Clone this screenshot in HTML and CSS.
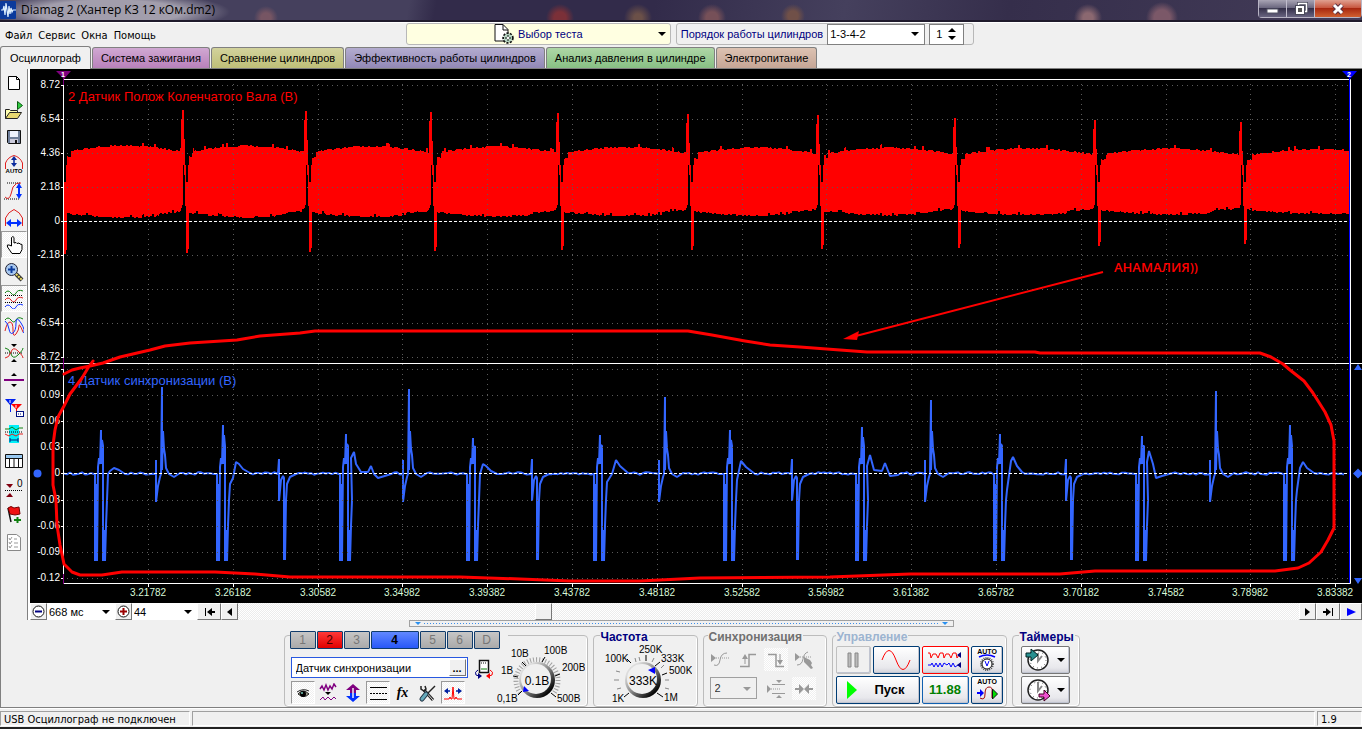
FILE: index.html
```
<!DOCTYPE html>
<html lang="ru">
<head>
<meta charset="utf-8">
<title>Diamag 2 (Хантер КЗ 12 кОм.dm2)</title>
<link rel="stylesheet" href="styles.css">
</head>
<body>
<header class="titlebar">
  <svg class="app-icon" width="16" height="18" viewBox="0 0 16 18"><rect width="16" height="18" rx="1" fill="#0b3a9c"/><path d="M1 9h2l1-4 1 9 1-12 2 14 1-11 1 8 1-6 1 4 1-2h3" fill="none" stroke="#dff0ff" stroke-width="1.2"/></svg>
  <h1 class="title">Diamag 2 (Хантер КЗ 12 кОм.dm2)</h1>
  <div class="win-buttons">
    <button class="win" aria-label="Свернуть"><svg width="14" height="14" viewBox="0 0 14 14"><rect x="1" y="7" width="11" height="4" fill="#fff" stroke="#555566"/></svg></button>
    <button class="win" aria-label="Развернуть"><svg width="14" height="14" viewBox="0 0 14 14"><path d="M4.500 4V1.500h8v8H10" fill="none" stroke="#4a4a5a" stroke-width="3"/><path d="M4.500 4V1.500h8v8H10" fill="none" stroke="#fff" stroke-width="1.500"/><rect x="3" y="5" width="6" height="6" fill="none" stroke="#4a4a5a" stroke-width="4"/><rect x="3" y="5" width="6" height="6" fill="#555" stroke="#fff" stroke-width="2"/></svg></button>
    <button class="win win-close" aria-label="Закрыть"><svg width="14" height="12" viewBox="0 0 14 12"><path d="M3 2l8 8M11 2l-8 8" stroke="#5a3040" stroke-width="5"/><path d="M3 2l8 8M11 2l-8 8" stroke="#fff" stroke-width="3"/></svg></button>
  </div>
</header>

<div class="menubar">
  <nav class="menu"><a href="#">Файл</a><a href="#">Сервис</a><a href="#">Окна</a><a href="#">Помощь</a></nav>
  <div class="tools">
    <button class="test-pick">
      <svg width="20" height="20" viewBox="0 0 20 20"><path d="M1 .5h8l5 5V17H1z" fill="#fff" stroke="#111"/><path d="M9 .5V6h5" fill="none" stroke="#111"/><circle cx="14" cy="14" r="4.500" fill="#b8d8c4" stroke="#111" stroke-width="2.500" stroke-dasharray="2 1.200"/><circle cx="14" cy="14" r="4" fill="#b8d8c4"/><path d="M11 14h6M14 11v6" stroke="#111"/><circle cx="14" cy="14" r="1.200" fill="#fff"/></svg>
      <span>Выбор теста</span><i class="caret"></i>
    </button>
    <div class="order">
      <label for="order">Порядок работы цилиндров</label>
      <div class="pick order-pick"><select id="order"><option>1-3-4-2</option></select></div>
      <div class="spin"><input type="text" value="1" aria-label="Цилиндр"><span class="spin-arrows"><button class="up" aria-label="Больше"></button><button class="down" aria-label="Меньше"></button></span></div>
    </div>
  </div>
</div>

<nav class="tabs">
  <button class="tab tab-active">Осциллограф</button>
  <button class="tab tab-pink">Система зажигания</button>
  <button class="tab tab-olive">Сравнение цилиндров</button>
  <button class="tab tab-violet">Эффективность работы цилиндров</button>
  <button class="tab tab-green">Анализ давления в цилиндре</button>
  <button class="tab tab-brown">Электропитание</button>
</nav>

<main class="work">
  <aside class="side">
    <button aria-label="Новый"><svg viewBox="0 0 20 20"><path d="M4.500 3.500h8l3 3v10h-11z" fill="#fff" stroke="#000"/><path d="M12.500 3.500v3h3" fill="none" stroke="#000"/></svg></button>
    <button aria-label="Открыть"><svg viewBox="0 0 20 20"><path d="M1.500 18.500v-9h4l1 1h7v3" fill="#ffffb0" stroke="#222"/><path d="M1.500 18.500l4-6h12l-4 6z" fill="#e8d870" stroke="#222"/><path d="M13.500 1.500l5 4-5 4z" fill="#2ecc40" stroke="#0a5a10"/></svg></button>
    <button aria-label="Сохранить"><svg viewBox="0 0 20 20"><path d="M3.500 3.500h13v13h-12l-1-1z" fill="#70809c" stroke="#111"/><path d="M6 4h8v6H6z" fill="#eef3ff"/><path d="M6 12h8v4H6z" fill="#ccd"/><path d="M11 13h2v3h-2z" fill="#111"/></svg></button>
    <button aria-label="Авто по вертикали"><svg viewBox="0 0 20 20"><path d="M1.500 15V9Q4 3 10 1.500 16 3 18.500 9v6" fill="none" stroke="#e02020"/><path d="M10 4v7" stroke="#0a2a9c" stroke-width="1.500"/><path d="M7 6l3-4 3 4zM7 9l3 4 3-4z" fill="#0a2a9c"/><text x="10" y="19" text-anchor="middle" font-size="6" font-weight="700">AUTO</text></svg></button>
    <button aria-label="Амплитуда"><svg viewBox="0 0 20 20"><path d="M3 2h14M0 18h15" stroke="#000" stroke-dasharray="1 1"/><path d="M1 16q4 4 6-3L9 6q3-5 8-4" fill="none" stroke="#e02020"/><path d="M15 5v10" stroke="#0030ff" stroke-width="2"/><path d="M12 7l3-5 3 5zM12 13l3 5 3-5z" fill="#0030ff"/></svg></button>
    <button aria-label="Длительность"><svg viewBox="0 0 20 20"><path d="M1.500 18V10Q4 4 10 1.500 16 4 18.500 10v8" fill="none" stroke="#e02020"/><path d="M4 15h12" stroke="#0030ff" stroke-width="2"/><path d="M7 11l-5 4 5 4zM13 11l5 4-5 4z" fill="#0030ff"/></svg></button>
    <button class="pressed" aria-label="Рука"><svg viewBox="0 0 20 20"><path d="M7.500 11V2.500q1.500-2 2.500 0V8l2-.5 1 1 2-.5 1 1 2 .5v5l-2 4H8L3.500 12q-1-3 1.500-2z" fill="#fff" stroke="#000"/></svg></button>
    <button aria-label="Масштаб"><svg viewBox="0 0 20 20"><path d="M12 12l6 6" stroke="#333" stroke-width="4"/><path d="M12 12l6 6" stroke="#f0e060" stroke-width="2" stroke-dasharray="2 1"/><circle cx="7.500" cy="7.500" r="6" fill="#a8c8f0" stroke="#223"/><path d="M4 7.500h7M7.500 4v7" stroke="#0a3a9c" stroke-width="2"/></svg></button>
    <button class="pressed" aria-label="Разделить сигналы"><svg viewBox="0 0 20 20" fill="none"><path d="M1 4q3-4 6 0t5 0 7-2" stroke="#108010"/><path d="M1 11q3-4 6 0t5 0 7-2" stroke="#e02020"/><path d="M1 18q3-4 6 0t5 0 7-2" stroke="#1030ff"/><path d="M1 6.500h18M1 13.500h18" stroke="#000" stroke-dasharray="1 1"/></svg></button>
    <button aria-label="Наложить сигналы"><svg viewBox="0 0 20 20" fill="none"><path d="M1 4q3-4 6 0t5 0 7-1" stroke="#108010"/><path d="M1 15q2-9 5-9t3 8 3 4 3-8 4 6" stroke="#e02020"/><path d="M1 5q3 2 4 8t4 4 3-10 5 0 2 10" stroke="#1030ff"/></svg></button>
    <button aria-label="Совместить"><svg viewBox="0 0 20 20" fill="none"><path d="M1 10h18" stroke="#000" stroke-dasharray="1 1"/><path d="M1 5q4 0 6 6t7 1 5-7" stroke="#108010"/><path d="M1 15q4 0 6-6t7-1 5 7" stroke="#e02020"/><path d="M7 1h6l-3 3zM7 19h6l-3-3z" fill="#000"/></svg></button>
    <button aria-label="Сдвиг"><svg viewBox="0 0 20 20"><path d="M0 10h20" stroke="#800080" stroke-width="2"/><path d="M7 6h6l-3-3zM7 14h6l-3 3z" fill="#000"/></svg></button>
    <button aria-label="Маркеры"><svg viewBox="0 0 20 20"><path d="M1 2h11L7 8v7H6V8z" fill="#0020f0"/><path d="M7 7h11l-5 5v4h-1v-4z" fill="#f00"/><path d="M6 3v3M12 8v3" stroke="#fff"/><rect x="12.500" y="14.500" width="7" height="5" fill="#fff" stroke="#001080"/><path d="M14 17h4" stroke="#001080" stroke-dasharray="1 1"/></svg></button>
    <button aria-label="Фильтр"><svg viewBox="0 0 20 20" fill="none"><path d="M5 1h10v18H5z" fill="#00f0f8"/><path d="M1 5h4l3-2 4 3 3-2h4" stroke="#108010"/><path d="M1 8h18" stroke="#000" stroke-dasharray="1 1"/><path d="M1 10l4 2 3-2 4 2 3-2h4" stroke="#e02020"/><path d="M6 16h8M6 14v4M14 14v4" stroke="#002080"/></svg></button>
    <button aria-label="Таблица"><svg viewBox="0 0 20 20"><path d="M1.500 3.500h17v13h-17z" fill="#fff" stroke="#111"/><path d="M2 4h16v3H2z" fill="#98c8f0"/><path d="M2 7.500h16M5.500 7v9M10 7v9M14.500 7v9" stroke="#111"/></svg></button>
    <button aria-label="Ноль"><svg viewBox="0 0 20 20"><path d="M1 12.500h18" stroke="#000" stroke-dasharray="1 1"/><path d="M2 6h7l-3 4zM2 19h7l-3-4z" fill="#800010"/><text x="13" y="9" font-size="10">0</text></svg></button>
    <button aria-label="Добавить метку"><svg viewBox="0 0 20 20"><path d="M4 3l3 14" stroke="#111" stroke-width="1.500"/><path d="M4 3q3-3 6 0l5-1 1 7-5 1-5-1z" fill="#f01010" stroke="#700"/><path d="M10 15h7M13.500 12v6" stroke="#108010" stroke-width="2"/></svg></button>
    <button aria-label="Список"><svg viewBox="0 0 20 20" fill="none"><path d="M3.500 2.500h9l4 3v13h-13z" fill="#fff" stroke="#888"/><path d="M5 6l1 2 2-3M5 10l1 2 2-3M5 14l1 2 2-3M10 7h3M10 11h4M10 15h4" stroke="#999"/></svg></button>
  </aside>

  <section class="scope">
    <svg class="chart" id="chart" viewBox="30 69 1332 534" role="img" aria-label="Осциллограмма">
      <rect x="30" y="69" width="1332" height="534" fill="#000"/>
      <path id="crank" fill="#f00" shape-rendering="crispEdges"/>
      <path id="sync" class="sync"/>
      <g id="grid" class="grid"></g>
      <path class="zero" d="M64 221.500H1350M64 473.500H1350"/>
      <path class="frame" d="M63.500 79.500H1350.500V583.500H63.500ZM30 363.500H1362"/>
      <path d="M63.500 76v9M63.500 358v11M63.500 574v10" stroke="#800080"/>
      <path d="M1349.500 76V583" stroke="#00f"/>
      <path d="M56 71h15l-7 8z" fill="#800080"/><path d="M1342 71h15l-7 8z" fill="#00f"/>
      <g class="flag"><text x="61" y="77">1</text><text x="1347" y="77">2</text></g>
      <g id="ticks" stroke="#fff"></g>
      <g id="labels" class="axis"></g>
      <text class="name" x="68" y="101" fill="#f00">2 Датчик Полож Коленчатого Вала (В)</text>
      <text class="name" x="68" y="385" fill="#36f">4 Датчик синхронизации (В)</text>
      <g fill="#36f"><circle cx="37.500" cy="473.500" r="4"/><path d="M1354 370l4-6 4 6zM1354 578h8l-4 6zM1353 473.500l5-5 4 4v2l-4 4z"/></g>
      <path class="pen" d="M64 374L72 370 80 368 90 366 103 363 120 357 150 350 165 346 190 343 237 340 260 336 300 333 315 331H688L712 335 745 341 770 345 800 347 840 350 867 352H1035L1040 353H1260L1271 357 1283 364 1290 370 1304 381 1313 393 1325 412 1331 425 1334 441V528L1328 540 1321 552 1309 563 1298 568 1275 571H1095L1060 574H910L830 577 700 578 640 581H570L520 579 460 577H290L255 574 215 572H122L102 575H80L72 572 64 564 60 545 57 525 56 500 53 485V445L55 430 58 417 64 406 70 394 82 378 88 368 93 361"/>
      <path d="M1103 272L852 337" stroke="#f00" stroke-width="2"/><path d="M843 339l16-8-2 9z" fill="#f00"/>
      <text class="note" x="1114" y="272">АНАМАЛИЯ))</text>
    </svg>
    <div class="scroll">
      <button class="bevel b17" aria-label="Сжать"><svg width="13" height="13" viewBox="0 0 13 13"><circle cx="6.500" cy="6.500" r="5.500" fill="#fff" stroke="#111"/><path d="M3 6.500h7" stroke="#000080" stroke-width="2"/></svg></button>
      <div class="pick time"><select aria-label="Время"><option>668 мс</option></select></div>
      <button class="bevel b17" aria-label="Растянуть"><svg width="13" height="13" viewBox="0 0 13 13"><circle cx="6.500" cy="6.500" r="5.500" fill="#fff" stroke="#111"/><path d="M3 6.500h7M6.500 3v7" stroke="#900" stroke-width="2"/></svg></button>
      <div class="pick scale"><select aria-label="Кадр"><option>44</option></select></div>
      <button class="bevel b24" aria-label="В начало"><svg width="11" height="8" viewBox="0 0 11 8"><path d="M1 0h1v8H1zM8 0v8L3 4zM8 3h3v2H8z"/></svg></button>
      <button class="bevel b17" aria-label="Назад"><svg width="5" height="8" viewBox="0 0 5 8"><path d="M5 0v8L0 4z"/></svg></button>
      <div class="track"><span class="thumb"></span></div>
      <button class="bevel b17" aria-label="Вперёд"><svg width="5" height="8" viewBox="0 0 5 8"><path d="M0 0v8l5-4z"/></svg></button>
      <button class="bevel b24" aria-label="В конец"><svg width="11" height="8" viewBox="0 0 11 8"><path d="M9 0h1v8H9zM3 0v8l5-4zM0 3h3v2H0z"/></svg></button>
      <button class="bevel b22" aria-label="Проиграть"><svg width="9" height="8" viewBox="0 0 9 8"><path d="M0 0v8l9-4z" fill="#00f"/></svg></button>
    </div>
  </section>
</main>

<footer class="deck">
  <div class="rail"><i></i><i></i></div>
  <div class="groups">
    <fieldset class="group g-channel">
      <legend class="channels"><button>1</button><button class="ch-red">2</button><button>3</button><button class="ch-blue">4</button><button>5</button><button>6</button><button>D</button></legend>
      <div class="channel-left">
        <div class="channel-line">
          <div class="name-box"><input type="text" value="Датчик синхронизации" aria-label="Датчик"><button class="bevel" aria-label="Выбрать">...</button></div>
          <button class="flat" aria-label="Повернуть"><svg viewBox="0 0 20 20"><path d="M5.500 1.500h9v12h-9z" fill="#fff" stroke="#111" stroke-width="1.500"/><path d="M7 4h6" stroke="#111" stroke-dasharray="1 1"/><path d="M7 10h6" stroke="#108010"/><path d="M4 11q-4 2-2 5l3 1" fill="none" stroke="#000080"/><path d="M4 14l4 3-4 3z" fill="#000080"/><path d="M16 11q4 2 2 5l-3 1" fill="none" stroke="#f00"/><path d="M16 14l-4 3 4 3z" fill="#f00"/></svg></button>
        </div>
        <div class="icon-line">
          <button class="flat pressed" aria-label="Видимость"><svg viewBox="0 0 20 20"><path d="M5 11q5-6 11 0-5 5-11 0z" fill="#998" stroke="#222"/><circle cx="10" cy="11" r="3" fill="#000"/><circle cx="9" cy="10" r="1" fill="#7cb"/><path d="M4 9q6-4 12-1" stroke="#222" fill="none"/></svg></button>
          <button class="flat" aria-label="Сглаживание"><svg viewBox="0 0 20 20" fill="none"><path d="M2 6l2-3 2 4 2-5 2 5 2-4 2 3 2-5 2 3" stroke="#800080" stroke-width="1.500"/><path d="M7 9h6l-3 3z" fill="#000"/><path d="M2 17l3-3 2 3 3-3 3 3 3-3 2 2" stroke="#800080"/></svg></button>
          <button class="flat" aria-label="Инверсия"><svg viewBox="0 0 20 20"><path d="M10 1l7 6h-4v3H7V7H3z" fill="#800080"/><path d="M10 19l-7-6h4v-3h6v3h4z" fill="#0030ff"/><path d="M10 5v10" stroke="#f0f0f0" stroke-width="1.500"/></svg></button>
          <button class="flat pressed" aria-label="Линии"><svg viewBox="0 0 20 20"><path d="M2 4.500h17M2 16.500h17" stroke="#000"/><path d="M2 10.500h17" stroke="#000" stroke-dasharray="2 1"/></svg></button>
          <button class="flat fx" aria-label="Функция"><em>fx</em></button>
          <button class="flat" aria-label="Настройки"><svg viewBox="0 0 20 20" fill="none"><path d="M15 17L6 7" stroke="#222" stroke-width="3"/><path d="M15 17L6 7" stroke="#ddd"/><path d="M3 3v3l3 2 2-2-1-3" stroke="#222" stroke-width="1.500"/><path d="M17 3L9 11" stroke="#222" stroke-width="1.500"/><path d="M8 11l-4 5" stroke="#234" stroke-width="5" stroke-linecap="round"/><path d="M8 11l-4 5" stroke="#6ab" stroke-width="3" stroke-linecap="round"/></svg></button>
          <button class="flat pressed" aria-label="Центр"><svg viewBox="0 0 20 20"><path d="M4 8h3M13 8h3" stroke="#0020a0" stroke-width="1.500"/><path d="M1 8l4-3v6zM19 8l-4-3v6z" fill="#0020a0"/><path d="M1 16h5l1-2 1 2h1l1-12 1 12h1l1-2 1 2h5" fill="none" stroke="#f00"/></svg></button>
        </div>
      </div>
      <svg class="dial" width="88" height="66" viewBox="498 640 88 66">
        <path class="ring" d="M521 693A21 21 0 1 1 555 693"/>
        <path class="leads" d="M519 695l4-4M514 676l5 1M523 662l4 4M546 657l-3 5M561 674l-5 2M557 697l-5-4"/>
        <circle cx="538" cy="680" r="18" fill="url(#knob)"/><circle cx="537" cy="679" r="15" fill="#f0f0f0"/>
        <path d="M524 692l1-6 5 5z" fill="#00f"/>
        <g class="dial-text"><text x="498" y="702">0,1В</text><text x="502" y="674">1В</text><text x="512" y="657">10В</text><text x="545" y="654">100В</text><text x="563" y="671">200В</text><text x="558" y="702">500В</text></g>
        <text class="dial-value" x="538" y="685">0.1В</text>
        <defs><linearGradient id="knob" x1="0" y1="0" x2="1" y2="1"><stop offset=".2" stop-color="#ddd"/><stop offset=".5" stop-color="#888"/><stop offset=".85" stop-color="#000"/></linearGradient></defs>
      </svg>
    </fieldset>

    <fieldset class="group g-freq">
      <legend>Частота</legend>
      <svg class="dial" width="92" height="66" viewBox="598 640 92 66">
        <path class="leads" d="M622 697l5-4M625 659l4 4M644 655v6M658 662l-5 4M665 673l-5 2M661 697l-6-4"/>
        <path d="M619 688l-4 1M617 680h-5M618 672l-4-1M634 662l-1-4M638 661l-1-4M650 662l2-4M663 680h4M663 688l4 1M659 668l3-3" stroke="#888"/>
        <circle cx="641" cy="680" r="18" fill="url(#knob)"/><circle cx="640" cy="679" r="15" fill="#f0f0f0"/>
        <path d="M646 670l7-3v7z" fill="#00f"/>
        <g class="dial-text"><text x="603" y="662">100K</text><text x="637" y="653">250K</text><text x="659" y="662">333K</text><text x="667" y="674">500K</text><text x="662" y="701">1M</text><text x="610" y="702">1K</text></g>
        <text class="dial-value" x="641" y="685">333K</text>
      </svg>
    </fieldset>

    <fieldset class="group g-sync">
      <legend>Синхронизация</legend>
      <div class="sync-grid">
        <button class="flat" aria-label="Уровень"><svg viewBox="0 0 20 20"><path d="M1 4l5 4-5 4z" fill="#999"/><path d="M6 8h13" stroke="#999" stroke-dasharray="1 1"/><path d="M4 15q5 2 6-5t7-7" fill="none" stroke="#999"/></svg></button>
        <button class="flat" aria-label="Фронт"><svg viewBox="0 0 20 20"><path d="M2 16.500h9V4.500h7" fill="none" stroke="#999" stroke-width="1.500"/><path d="M7 14V8" stroke="#999"/><path d="M4 9l3-5 3 5z" fill="#999"/></svg></button>
        <button class="flat hatched" aria-label="Спад"><svg viewBox="0 0 20 20"><path d="M2 4.500h8v12h8" fill="none" stroke="#999" stroke-width="1.500"/><path d="M14 4v7" stroke="#999"/><path d="M11 10l3 5 3-5z" fill="#999"/></svg></button>
        <button class="flat" aria-label="Вручную"><svg viewBox="0 0 20 20"><path d="M1 3l5 4-5 4z" fill="#999"/><path d="M6 7h12" stroke="#999" stroke-dasharray="1 1"/><path d="M3 15q5 0 6-6t5-7" fill="none" stroke="#999"/><path d="M10 7l6 3 2 3-1 2 2 3-2 1-3-3-4-4z" fill="#999"/></svg></button>
        <div class="pick sync-pick"><select aria-label="Канал" disabled><option>2</option></select></div>
        <button class="flat" aria-label="Пороги"><svg viewBox="0 0 20 20"><path d="M1 6l4 4-4 4z" fill="#999"/><path d="M5 10h9" stroke="#999" stroke-dasharray="1 1"/><path d="M6 5.500h13M6 14.500h13" stroke="#999"/><path d="M10 1h6l-3 3zM10 19h6l-3-3z" fill="#999"/></svg></button>
        <button class="flat hatched" aria-label="Сблизить"><svg viewBox="0 0 20 20"><path d="M1 10h6M13 10h6" stroke="#999" stroke-width="2"/><path d="M5 5l5 5-5 5zM15 5l-5 5 5 5z" fill="#999"/></svg></button>
      </div>
    </fieldset>

    <fieldset class="group g-run">
      <legend>Управление</legend>
      <div class="run-grid">
        <button class="push off" aria-label="Пауза"><svg width="12" height="16" viewBox="0 0 12 16"><path d="M1 1h3v14H1zM8 1h3v14H8z" fill="#bbb" stroke="#888"/></svg></button>
        <button class="push" aria-label="Синус"><svg width="32" height="22" viewBox="0 0 32 22"><path d="M2 11Q9-8 16 11t14 0" fill="none" stroke="#f00"/></svg></button>
        <button class="push red" aria-label="Сигналы"><svg width="36" height="20" viewBox="0 0 36 20" fill="none"><path d="M1 3h2l1 5 2-4 3 0 2 4 2-5 3 0 1 5 2-4 3 0 2 4 2-5 3 0 1 5 2-3" stroke="#f00"/><path d="M1 15h3l1-2 2 4 2-4 2 4 2-4 2 4 2-4 3 2 2-2 2 4 2-4 2 4 3-2" stroke="#00f"/><path d="M34 2v6l-4-3zM34 12v6l-4-3z" fill="#000080"/></svg></button>
        <button class="push" aria-label="Авто"><svg width="26" height="24" viewBox="0 0 26 24"><text class="mini" x="13" y="6">AUTO</text><path d="M5 9q8-4 16 0" fill="none" stroke="#00f" stroke-width="1.500"/><circle cx="13" cy="16" r="6" fill="none" stroke="#555" stroke-width="2" stroke-dasharray="1 1"/><circle cx="13" cy="16" r="5" fill="#fff" stroke="#111"/><path d="M11 13l2 5 2-5" fill="none" stroke="#00f"/></svg></button>
        <button class="push start"><svg width="11" height="18" viewBox="0 0 11 18"><path d="M1 0l10 9L1 18z" fill="#0f0"/></svg><span>Пуск</span></button>
        <button class="push value">11.88</button>
        <button class="push" aria-label="Автопуск"><svg width="26" height="24" viewBox="0 0 26 24"><text class="mini" x="13" y="6">AUTO</text><path d="M3 15h4" stroke="#00f" stroke-width="2"/><path d="M6 11l4 4-4 4z" fill="#00f"/><path d="M6 20q5 3 5-4 0-7 4-7t3 5v6" fill="none" stroke="#a00000"/><path d="M18.500 11l5 5-5 5z" fill="#0d0" stroke="#111"/></svg></button>
      </div>
    </fieldset>

    <fieldset class="group g-timer">
      <legend>Таймеры</legend>
      <div class="timers">
        <button class="push gray" aria-label="Таймер пуска"><svg width="26" height="24" viewBox="0 0 26 24"><circle cx="13" cy="12" r="10" fill="#fff" stroke="#222" stroke-width="1.500"/><circle cx="13" cy="12" r="8" fill="none" stroke="#555" stroke-dasharray="1 3.200"/><path d="M13 5v8l4-5" fill="none" stroke="#888" stroke-width="2"/><path d="M1 5h5V1l7 6-7 6V9H1z" fill="#289090" stroke="#022"/></svg><i class="caret"></i></button>
        <button class="push gray" aria-label="Таймер остановки"><svg width="26" height="24" viewBox="0 0 26 24"><circle cx="13" cy="12" r="10" fill="#fff" stroke="#222" stroke-width="1.500"/><circle cx="13" cy="12" r="8" fill="none" stroke="#555" stroke-dasharray="1 3.200"/><path d="M13 4v9l4-5" fill="none" stroke="#888" stroke-width="2"/><path d="M14 16h5v-4l6 6-6 5v-4h-5z" fill="#f050d0" stroke="#402"/></svg><i class="caret"></i></button>
      </div>
    </fieldset>
  </div>
</footer>

<div class="status"><span class="cell st-device">USB Осциллограф не подключен</span><span class="cell st-info"></span><span class="cell st-ver">1.9</span></div>
<script src="chart.js"></script>
</body>
</html>
```

FILE: chart.js
```
const NS = 'http://www.w3.org/2000/svg';
const byId = id => document.getElementById(id);

function add(parent, tag, attrs, text) {
  const el = document.createElementNS(NS, tag);
  for (const k in attrs) el.setAttribute(k, attrs[k]);
  if (text !== undefined) el.textContent = text;
  parent.appendChild(el);
}

let seed = 7;
function rnd() {
  seed = (seed * 16807) % 2147483647;
  return seed / 2147483647;
}

/* Axes: dotted grid, tick marks and captions */
const upper = ['8.72', '6.54', '4.36', '2.18', '0', '-2.18', '-4.36', '-6.54', '-8.72'];
const lower = ['0.12', '0.09', '0.06', '0.03', '0', '-0.03', '-0.06', '-0.09', '-0.12'];
const rows = upper.map((t, i) => [t, 85 + i * 34]).concat(lower.map((t, i) => [t, Math.round(369 + i * 26.1)]));
for (const [t, y] of rows) {
  if (t !== '0') add(byId('grid'), 'path', { d: `M67 ${y + 0.5}H1348` });
  add(byId('ticks'), 'path', { d: `M61 ${y + 0.5}h2` });
  add(byId('labels'), 'text', { x: 60, y: y + 3, 'text-anchor': 'end' }, t);
}
for (let i = 0; i < 15; i++) {
  const x = Math.round(148 + i * 84.8);
  add(byId('grid'), 'path', { d: `M${x + 0.5} 84V361M${x + 0.5} 364V580` });
  add(byId('ticks'), 'path', { d: `M${x + 0.5} 584v3` });
  add(byId('labels'), 'text', { x, y: 596, 'text-anchor': 'middle', class: 'time-label' }, (3.21782 + i * 0.044).toFixed(5));
}

/* Crankshaft sensor: [x of the missing-tooth spike, top, bottom] */
const teeth = [[59, 153, 254], [181, 110, 253], [304, 111, 252], [429, 112, 251], [556, 113, 250], [686, 114, 250],
  [816, 115, 249], [953, 118, 248], [1093, 120, 246], [1239, 122, 244], [1390, 125, 243]];
let band = '';
function column(x, top, bottom) {
  if (x >= 63 && x < 1349) band += `M${x} ${top}h1V${bottom}h-1z`;
}
teeth.forEach(([x, top, bottom], i) => {
  [[top + 9, 208], [top, 205], [top, 165], [top + 29, 175], [165, 206], [182, bottom], [182, bottom], [165, bottom - 4]]
    .forEach(([a, b], k) => column(x + k, a, b));
  const next = teeth[i + 1];
  if (!next) return;
  let jagTop = 0, jagBottom = 0;
  for (let c = x + 8; c < next[0]; c++) {
    const f = (c - x - 8) / (next[0] - x - 8);
    if (c % 2 === 0) {
      jagTop = rnd() > 0.93 ? -3 : Math.round(rnd());
      jagBottom = rnd() > 0.93 ? -2 : Math.round(rnd());
    }
    const arch = Math.sin(Math.PI * f);
    const lead = f < 0.03 ? 5 : 0;
    column(c, Math.round(151 + i * 0.4 - 6 * arch + lead + jagTop), Math.round(213 - i * 0.4 + 4 * arch + jagBottom - (f > 0.8 ? 2 : 0)));
  }
});
byId('crank').setAttribute('d', band);

/* Synchronisation sensor events: kind, x, peak, then [dx, y] points of the tail */
const events = [
  ['drop', 101, 430, [[7, 474], [9, 471], [13, 468], [18, 470], [24, 474]]],
  ['rise', 162, 387],
  ['drop', 223, 425, [[7, 484], [10, 478], [13, 462], [16, 464], [20, 469], [27, 473]]],
  ['fall', 284],
  ['drop', 346, 434, [[5, 458], [8, 452], [10, 464], [15, 472], [22, 472], [25, 466], [28, 474], [32, 478], [42, 475]]],
  ['rise', 409, 389],
  ['drop', 473, 438, [[7, 474], [10, 464], [13, 466], [18, 471], [24, 474]]],
  ['fall', 537],
  ['drop', 600, 435, [[7, 482], [12, 474], [16, 460], [20, 466], [28, 473]]],
  ['rise', 665, 397],
  ['drop', 730, 430, [[7, 480], [11, 461], [16, 467], [25, 474]]],
  ['fall', 797],
  ['drop', 862, 427, [[5, 466], [8, 455], [12, 470], [20, 471], [23, 463], [28, 476], [36, 475]]],
  ['rise', 931, 400],
  ['drop', 1000, 434, [[7, 490], [11, 461], [13, 457], [17, 466], [22, 472]]],
  ['fall', 1071],
  ['drop', 1142, 436, [[5, 462], [7, 451], [11, 464], [14, 478], [20, 476], [27, 474]]],
  ['rise', 1216, 391],
  ['drop', 1290, 425, [[7, 490], [10, 468], [13, 462], [17, 468], [24, 473]]]
];
let line = 'M64 473.5';
let pen = 64;
const to = (x, y) => { line += `L${x} ${y}`; pen = x; };
for (const [kind, x, peak, tail] of events) {
  const start = kind === 'drop' ? x - 6 : x - 5;
  while (pen + 5 < start) to(pen + 3, 473.5 + (rnd() - 0.5) * 2.5);
  to(start - 1, 474);
  if (kind === 'drop') {
    [[-6, 474], [-6, 561], [-5, 484], [-4, 561], [-3, 467], [-2, 458], [-1, 464], [0, peak], [0, 464],
      [1, peak + 10], [2, 446], [2, 561], [3, 530], [4, 561], [5, 526], [6, 500]].forEach(([dx, y]) => to(x + dx, y));
    tail.forEach(([dx, y]) => to(x + dx, y));
  } else if (kind === 'rise') {
    [[-6, 460], [-6, 502], [-4, 486], [-2, 477], [-1, 474], [0, peak], [0, 470], [1, 431], [2, 449], [3, 455], [4, 468],
      [7, 474], [12, 477], [18, 473]].forEach(([dx, y]) => to(x + dx, y));
  } else {
    [[-5, 459], [-5, 501], [-3, 480], [-1, 476], [0, 478], [0, 560], [1, 500], [1, 560], [2, 500], [3, 484],
      [6, 477], [12, 474]].forEach(([dx, y]) => to(x + dx, y));
  }
}
while (pen < 1344) to(pen + 3, 473.5 + (rnd() - 0.5) * 2.5);
byId('sync').setAttribute('d', line);
```

FILE: styles.css
```
* { box-sizing: border-box; }
body {
  margin: 0;
  min-height: 100vh;
  display: flex;
  flex-direction: column;
  background: #f0f0f0;
  color: #000;
  font: 11px/14px "Liberation Sans", Arial, sans-serif;
}
button, input, select { font: inherit; color: inherit; margin: 0; padding: 0; border: 0; }
button { display: flex; align-items: center; justify-content: center; background: none; }
svg { display: block; flex: none; }
svg text { font-family: "Liberation Sans", Arial, sans-serif; }

.titlebar {
  display: flex;
  align-items: center;
  gap: 5px;
  height: 22px;
  border-bottom: 2px solid #1f1a2c;
  background:
    radial-gradient(ellipse 120px 20px at 110px 12px, #a29eac 0 60%, transparent 100%),
    radial-gradient(circle at 266px 18px, #765563 0 5px, transparent 12px),
    radial-gradient(circle at 560px 18px, #7b3038 0 6px, transparent 14px),
    radial-gradient(circle at 638px 18px, #6b5048 0 4px, transparent 14px),
    radial-gradient(circle at 712px 18px, #765058 0 6px, transparent 14px),
    radial-gradient(circle at 793px 16px, #705048 0 5px, transparent 12px),
    radial-gradient(circle at 1088px 18px, #8b6870 0 5px, transparent 14px),
    radial-gradient(circle at 1162px 18px, #7b5868 0 8px, transparent 16px),
    linear-gradient(100deg, #45405d 0 30%, #322b4a 32% 48%, #45405d 62%, #352e4b 74%, #433c58);
}
.title { margin: 0; flex: 1; font: 12px/16px "Open Sans", sans-serif; }
.win-buttons { display: flex; align-self: flex-start; border: 1px solid #b8b4c4; border-top: 0; border-radius: 0 0 4px 4px; }
.win { width: 28px; height: 17px; border-right: 1px solid #c0bccc; background: linear-gradient(#a8a4b4, #6c6880 45%, #35304a 50%, #686480); }
.win-close { width: 46px; border: 0; background: linear-gradient(#e0a090, #c85840 45%, #a82810 50%, #d06030); }

.menubar { display: grid; grid-template-columns: 1fr auto 1fr; height: 25px; border-top: 1px solid #fff; }
.menu { display: flex; gap: 6px; padding: 6px 0 0 5px; font: 11px/14px "DejaVu Sans Condensed", "DejaVu Sans", sans-serif; }
.menu a { color: #000; text-decoration: none; }
.tools { display: flex; gap: 5px; padding-left: 18px; }
.test-pick {
  position: relative;
  width: 265px;
  height: 22px;
  gap: 4px;
  border: 1px solid #b8b8b8;
  border-radius: 3px;
  background: #ffffe1;
  color: #000080;
}
.test-pick .caret { position: absolute; right: 4px; }
.caret { width: 0; height: 0; border: 4px solid transparent; border-top-color: #000; border-bottom: 0; }
.order { display: flex; align-items: center; gap: 4px; height: 22px; padding: 0 9px 0 4px; border: 1px solid #b8b8b8; border-radius: 3px; color: #000080; }
.pick { position: relative; display: flex; background: #fff; color: #000; }
.pick::after { content: ""; position: absolute; right: 5px; top: 7px; border: 4px solid transparent; border-top-color: #000; border-bottom: 0; pointer-events: none; }
.pick select { width: 100%; appearance: none; background: none; padding-left: 2px; opacity: 1; }
.order-pick { width: 98px; height: 21px; border: 1px solid #808080; }
.spin { display: flex; width: 35px; height: 21px; border: 1px solid #808080; background: #fff; color: #000; }
.spin input { width: 18px; padding-left: 6px; background: none; }
.spin-arrows { display: flex; flex-direction: column; justify-content: center; gap: 4px; }
.spin-arrows button { border: 4px solid transparent; }
.spin-arrows .up { border-top: 0; border-bottom-color: #000; }
.spin-arrows .down { border-bottom: 0; border-top-color: #000; }

.tabs { display: flex; align-items: flex-end; gap: 1px; height: 22px; border-bottom: 1px solid #808080; }
.tab { height: 21px; padding: 0 8px; border: 1px solid #808080; border-bottom: 0; border-radius: 3px 3px 0 0; white-space: nowrap; }
.tab-active { height: 23px; margin-bottom: -1px; padding: 0 9px; background: #f0f0f0; }
.tab-pink { background: linear-gradient(#d0a8d2, #b981bb); }
.tab-olive { background: linear-gradient(#d2d29c, #bfbf78); }
.tab-violet { background: linear-gradient(#b3accf, #9288b6); }
.tab-green { background: linear-gradient(#aed6a6, #88c084); }
.tab-brown { background: linear-gradient(#dcc2b2, #c6a696); }

.work { display: flex; flex: 1; min-height: 0; }
.side { display: flex; flex-direction: column; width: 30px; border-left: 1px solid #808080; border-right: 2px solid #fff; box-shadow: inset -1px 0 #808080; }
.side button { width: 26px; height: 27px; }
.side svg { width: 20px; height: 20px; }
.pressed { border: 1px solid; border-color: #999 #fff #fff #999; background: repeating-conic-gradient(#fff 0 25%, #f0f0f0 0 50%) 0 0 / 2px 2px; }
.scope { display: flex; flex: 1; flex-direction: column; min-width: 0; background: #000; }
.chart { width: 100%; flex: 1 1 auto; min-height: 0; }
.grid path { fill: none; stroke: #5a5a5a; stroke-dasharray: 1 4; }
.zero { fill: none; stroke: #fff; stroke-dasharray: 3 2; }
.frame { fill: none; stroke: #fff; }
.sync { fill: none; stroke: #36f; stroke-width: 2; stroke-linejoin: bevel; }
.pen { fill: none; stroke: #f00; stroke-width: 3; stroke-linejoin: round; stroke-linecap: round; }
.axis { fill: #fff; font-size: 10px; }
.time-label { fill: #d8f8d8; }
.name { font-size: 13px; }
.flag { fill: #fff; font-size: 7px; font-weight: 700; }
svg .note { fill: #f00; font: 600 13px "Open Sans", sans-serif; }

.scroll { display: flex; height: 17px; background: #f0f0f0; }
.bevel { border: 1px solid; border-color: #fff #777 #777 #fff; background: #f0f0f0; }
.b17 { width: 17px; }
.b24 { width: 24px; }
.b22 { width: 22px; }
.time { width: 68px; }
.scale { width: 65px; }
.track { flex: 1; background: repeating-conic-gradient(#fff 0 25%, #ececec 0 50%) 0 0 / 2px 2px; }
.thumb { display: block; width: 17px; height: 17px; margin-left: 28%; border: 1px solid; border-color: #fff #777 #777 #fff; background: #f0f0f0; }

.deck { display: flex; flex-direction: column; align-items: center; height: 88px; border-left: 1px solid #808080; border-bottom: 1px solid #808080; }
.rail { display: flex; align-items: center; justify-content: space-between; width: 40%; height: 7px; padding: 0 5px; border: 1px solid #a0a0a0; background: repeating-linear-gradient(90deg, #3c8de8 0 1px, transparent 1px 3px) 14px 2px / calc(100% - 28px) 1px no-repeat; }
.rail i { border: 3px solid transparent; border-top-color: #2890f0; border-bottom: 0; }
.groups { display: flex; gap: 5px; padding-top: 4px; }
.group { display: flex; margin: 0; min-width: 0; height: 76px; padding: 0 4px; border: 1px solid #bcbcbc; border-radius: 4px; box-shadow: inset -1px -1px #fff; }
.group legend { height: 9px; padding: 0 1px; font-weight: 700; font-size: 12px; line-height: 12px; color: #000080; }
.group .channels { display: flex; gap: 1px; padding: 0 8px 0 0; margin-left: 1px; font-weight: 400; }
.g-channel { width: 304px; }
.channels button { width: 26px; height: 18px; border: 1px solid #103c6c; border-radius: 1px; background: linear-gradient(#c6c6c6, #aaa); color: #777; }
.channels .ch-red { background: linear-gradient(#ff3838, #e00000); color: #400; }
.channels .ch-blue { width: 48px; background: linear-gradient(#6088ff, #2858f8); color: #000; font-weight: 700; }
.channel-left { flex: none; width: 208px; padding: 17px 0 0 2px; }
.channel-line { display: flex; gap: 4px; }
.name-box { display: flex; width: 177px; height: 21px; padding: 1px; border: 1px solid #2858e0; background: #fff; }
.name-box input { flex: 1; min-width: 0; padding-left: 3px; background: none; }
.name-box button { width: 17px; font-weight: 700; line-height: 8px; }
.icon-line { display: flex; gap: 1px; padding-top: 1px; }
.flat { width: 24px; height: 23px; }
.flat svg { width: 20px; height: 20px; }
.fx { font: 700 14px/16px "Liberation Serif", serif; }
.ring { fill: none; stroke: #a0a0a0; stroke-width: 5; stroke-dasharray: 1 2; }
.leads { stroke: #000; fill: none; }
.dial-text { font-size: 10px; }
.dial-value { font-size: 12px; text-anchor: middle; }
.g-freq { width: 105px; padding: 0 6px; }
.g-sync { width: 124px; }
.g-sync legend { color: #707070; }
.hatched { background: repeating-conic-gradient(#fff 0 25%, #f0f0f0 0 50%) 0 0 / 2px 2px; }
.sync-grid { display: grid; grid-template-columns: repeat(4, 28px); gap: 6px 0; align-content: start; padding-top: 8px; }
.sync-pick { grid-column: span 2; width: 47px; height: 22px; margin-left: 2px; border: 1px solid #a0a0a0; background: #f0f0f0; }
.sync-pick select { color: #333; padding-left: 4px; }
.sync-pick::after { top: 9px; border-top-color: #999; }
.g-run { width: 175px; padding: 0 3px; }
.g-run legend { color: #9cb4d0; }
.run-grid { display: grid; grid-template-columns: 35px 47px 47px 32px; gap: 2px; align-content: start; padding-top: 6px; }
.push { height: 28px; border: 1px solid #003c74; border-radius: 2px; background: linear-gradient(#fff, #e8e8ec 80%, #d0d0d8); box-shadow: inset -1px -1px #c0c4d0; }
.off { border-color: #c0c0c0; background: #f0f0f0; }
.red { border-color: #f00; }
.start { grid-column: span 2; justify-content: flex-start; gap: 18px; padding-left: 9px; font-weight: 700; font-size: 13px; }
.value { border-color: #1060b0; color: #008000; font-weight: 700; font-size: 13px; }
.mini { font-size: 7px; font-weight: 700; text-anchor: middle; }
.g-timer { width: 68px; padding: 0 8px; }
.g-timer legend { margin-left: -2px; }
.timers { display: flex; flex-direction: column; gap: 2px; padding-top: 6px; }
.gray { width: 49px; gap: 6px; border-color: #777; }

.status { display: flex; gap: 2px; height: 21px; padding: 2px 0 1px; border-top: 1px solid #fff; border-bottom: 2px solid #222; font: 11px/16px "DejaVu Sans Condensed", "DejaVu Sans", sans-serif; }
.cell { padding-left: 3px; border: 1px solid; border-color: #a0a0a0 #fff #fff #a0a0a0; white-space: nowrap; }
.st-device { width: 190px; }
.st-info { flex: 1; }
.st-ver { width: 45px; }
```
